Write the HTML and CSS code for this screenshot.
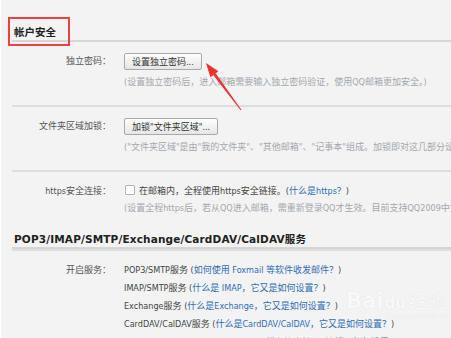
FILE: index.html
```html
<!DOCTYPE html>
<html lang="zh-CN">
<head>
    <meta charset="UTF-8">
    <title>设置 - 帐户</title>
    <link rel="stylesheet" href="styles.css">
</head>
<body>
    <div class="page">
        <section class="group">
            <h2 class="group-title">帐户安全<span class="mark"></span></h2>

            <div class="row row-first">
                <div class="label">独立密码：</div>
                <div class="field">
                    <div class="line"><button class="btn">设置独立密码...</button></div>
                    <p class="note">(设置独立密码后，进入邮箱需要输入独立密码验证，使用QQ邮箱更加安全。)</p>
                </div>
            </div>

            <div class="row">
                <div class="label">文件夹区域加锁：</div>
                <div class="field">
                    <div class="line"><button class="btn">加锁"文件夹区域"...</button></div>
                    <p class="note">("文件夹区域"是由"我的文件夹"、"其他邮箱"、"记事本"组成。加锁即对这几部分设置独立密码保护。)</p>
                </div>
            </div>

            <div class="row row-text">
                <div class="label">https安全连接：</div>
                <div class="field">
                    <label class="line check">
                        <span class="box"></span>在邮箱内，全程使用https安全链接。<span class="link">(<a href="#">什么是https？</a>)</span>
                    </label>
                    <p class="note">(设置全程https后，若从QQ进入邮箱，需重新登录QQ才生效。目前支持QQ2009中文正式版及以上版本。)</p>
                </div>
            </div>
        </section>

        <section class="group">
            <h2 class="group-title title-wide">POP3/IMAP/SMTP/Exchange/CardDAV/CalDAV服务</h2>

            <div class="row row-text">
                <div class="label">开启服务：</div>
                <div class="field">
                    <div class="line">POP3/SMTP服务 <span class="link">(<a href="#">如何使用 Foxmail 等软件收发邮件？</a>)</span></div>
                    <div class="line">IMAP/SMTP服务 <span class="link">(<a href="#">什么是 IMAP，它又是如何设置？</a>)</span></div>
                    <div class="line">Exchange服务 <span class="link">(<a href="#">什么是Exchange，它又是如何设置？</a>)</span></div>
                    <div class="line">CardDAV/CalDAV服务 <span class="link">(<a href="#">什么是CardDAV/CalDAV，它又是如何设置？</a>)</span></div>
                    <div class="line note-line">(POP3/IMAP/SMTP/CardDAV/CalDAV服务均支持SSL连接。<a href="#">如何设置？</a>)</div>
                </div>
            </div>
        </section>
    </div>

    <!-- red arrow pointing at the button -->
    <svg class="arrow" width="451" height="338" viewBox="0 0 451 338">
        <polygon points="205,63 217.4,71.2 209.4,77.2" fill="#e8322c"/>
        <polygon points="214.6,73.3 212.2,75.1 239.6,110.3 240.4,109.7" fill="#e8322c"/>
    </svg>

    <div class="watermark">
        <span class="wm-bai">Bai</span><span class="wm-paw">du</span><span class="wm-cn">经验</span>
        <span class="wm-url">jingyan.baidu.com</span>
    </div>
</body>
</html>
```

FILE: styles.css
```css
html, body {
    margin: 0;
    padding: 0;
}
body {
    width: 451px;
    height: 338px;
    overflow: hidden;
    background-color: #f3f3f3;
    border-left: 1px solid #fff;
    box-sizing: border-box;
    font-family: "DejaVu Sans Condensed", "DejaVu Sans", "Noto Sans CJK SC", sans-serif;
    font-size: 9px;
    color: #444;
    position: relative;
}
.page {
    padding: 24px 0 0 11px;
}
.group-title {
    position: relative;
    margin: 0;
    padding: 0 0 0 2px;
    font-family: "DejaVu Sans", "Noto Sans CJK SC", sans-serif;
    font-size: 10.5px;
    line-height: 16px;
    font-weight: bold;
    color: #222;
    border-bottom: 2px solid #d6d6d6;
    white-space: nowrap;
}
.title-wide {
    letter-spacing: 0.15px;
}
.mark {
    position: absolute;
    left: -4px;
    top: -7px;
    width: 58px;
    height: 25px;
    border: 2px solid #ef4040;
}
.group + .group {
    margin-top: 15px;
}
.row {
    display: flex;
    padding: 11px 0 15px;
    border-top: 2px solid #dedede;
    white-space: nowrap;
}
.row-first {
    border-top: 0;
}
.row-text {
    padding: 10px 0 0;
}
.label {
    width: 99px;
    flex-shrink: 0;
    text-align: right;
    line-height: 17px;
    color: #555;
}
.row-text .label {
    line-height: 18px;
}
.field {
    margin-left: 13px;
    min-width: 0;
}
.line {
    display: flex;
    align-items: center;
    height: 17px;
    color: #444;
}
.row-text .line {
    height: 18px;
    display: block;
    line-height: 18px;
}
.btn {
    height: 17px;
    padding: 0 7px;
    font: inherit;
    color: #333;
    background: linear-gradient(#fefefe, #e6e6e6);
    border: 1px solid #a9a9a9;
    border-radius: 2px;
}
.note {
    margin: 4px 0 0;
    line-height: 16px;
    color: #a3a8ae;
}
.row-text .note {
    margin: 0;
}
.check {
    display: block;
}
.box {
    display: inline-block;
    width: 8px;
    height: 8px;
    margin: 0 4px 0 1px;
    vertical-align: -1px;
    background: #fff;
    border: 1px solid #b5b5b5;
    border-radius: 1px;
}
.link {
    color: #444;
}
a {
    color: #2f6db4;
    text-decoration: none;
}
.note-line {
    color: #a3a8ae;
}
.arrow {
    position: absolute;
    left: 0;
    top: 0;
    pointer-events: none;
}
.watermark {
    position: absolute;
    left: 345px;
    top: 290px;
    color: rgba(255, 255, 255, 0.85);
    text-shadow: 0 0 1px rgba(0, 0, 0, 0.12);
    white-space: nowrap;
    line-height: 1;
}
.wm-bai, .wm-paw {
    font-family: "DejaVu Sans", sans-serif;
    font-size: 21px;
    font-weight: bold;
}
.wm-paw {
    font-size: 15px;
    padding: 0 1px;
}
.wm-cn {
    font-family: "Noto Sans CJK SC", sans-serif;
    font-size: 19px;
    margin-left: 2px;
}
.wm-url {
    display: block;
    margin: 1px 0 0 40px;
    font-family: "DejaVu Sans", sans-serif;
    font-size: 8px;
}
```
